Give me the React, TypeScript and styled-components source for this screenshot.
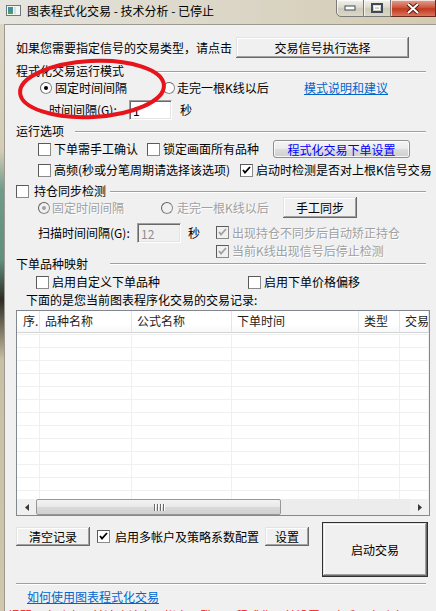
import styled, { createGlobalStyle } from "styled-components";

const GlobalStyle = createGlobalStyle`
  html, body {
    margin: 0;
    padding: 0;
    background: #f0f0f0;
  }
`;

const FONT = `"Noto Sans CJK SC", "Liberation Sans", sans-serif`;

const Win = styled.div`
  position: relative;
  width: 436px;
  height: 611px;
  overflow: hidden;
  display: flex;
  flex-direction: column;
  font: 12px ${FONT};
  color: #000;
  background: linear-gradient(
    to bottom,
    #ddd8c6 0px,
    #d4cdb6 150px,
    #6f9c8c 190px,
    #5f8f7f 260px,
    #2e2c24 300px,
    #c9c0a4 360px,
    #cfc7ae 611px
  );
`;

const TitleBar = styled.div`
  height: 24px;
  flex-shrink: 0;
  display: flex;
  align-items: flex-start;
  background: linear-gradient(to right, #e6e5df 0%, #dcd8ca 45%, #d3cab0 100%);
`;

const AppIcon = styled.svg`
  margin: 5px 0 0 6px;
`;

const Title = styled.div`
  margin-left: 6px;
  line-height: 22px;
  white-space: nowrap;
  color: #000;
`;

const Spacer = styled.div`
  flex: 1;
`;

const CapGroup = styled.div`
  display: flex;
  margin-top: -1px;
`;

const CapBtn = styled.div<{ $w: number; $close?: boolean; $first?: boolean }>`
  width: ${(p) => p.$w}px;
  height: 18px;
  display: flex;
  align-items: center;
  justify-content: center;
  box-sizing: border-box;
  border: 1px solid ${(p) => (p.$close ? "#6b2a1e" : "#7a7a76")};
  border-left-width: ${(p) => (p.$first ? 1 : 0)}px;
  border-radius: ${(p) => (p.$first ? "0 0 0 5px" : "0")};
  background: ${(p) =>
    p.$close
      ? "linear-gradient(to bottom, #e0a394 0%, #cf5a40 45%, #c0381e 55%, #d9755c 100%)"
      : "linear-gradient(to bottom, #f3f1ea 0%, #dedacd 45%, #cfcab9 55%, #dcd8c8 100%)"};
  box-shadow: inset 1px 1px rgba(255, 255, 255, 0.7);
`;

const Client = styled.div`
  flex: 1;
  margin-left: 4px;
  background: #f0f0f0;
  border-top: 1px solid #9c9a90;
  border-left: 1px solid #9c9a90;
  padding: 11px 0 0 11px;
  display: flex;
  flex-direction: column;
`;

const Row = styled.div<{ $h: number; $mt?: number; $pl?: number }>`
  display: flex;
  align-items: center;
  height: ${(p) => p.$h}px;
  margin-top: ${(p) => p.$mt ?? 0}px;
  padding-left: ${(p) => p.$pl ?? 0}px;
  white-space: nowrap;
  flex-shrink: 0;
`;

const Slot = styled.div<{ $w?: number; $ml?: number }>`
  display: flex;
  align-items: center;
  flex-shrink: 0;
  width: ${(p) => (p.$w ? `${p.$w}px` : "auto")};
  margin-left: ${(p) => p.$ml ?? 0}px;
`;

const Text = styled.span<{ $dis?: boolean }>`
  line-height: 14px;
  color: ${(p) => (p.$dis ? "#a0a0a0" : "#000")};
  text-shadow: ${(p) => (p.$dis ? "1px 1px #ffffff" : "none")};
`;

const Line = styled.div`
  flex: 1;
  height: 1px;
  margin-right: 10px;
  background: #a0a0a0;
  box-shadow: 0 1px #ffffff;
`;

const Btn = styled.button<{ $w: number; $h: number }>`
  width: ${(p) => p.$w}px;
  height: ${(p) => p.$h}px;
  flex-shrink: 0;
  padding: 0;
  border: none;
  background: #f0f0f0;
  font: 12px ${FONT};
  color: #000;
  box-shadow: inset -1px -1px #696969, inset 1px 1px #e3e3e3,
    inset -2px -2px #a0a0a0, inset 2px 2px #ffffff;
`;

const DefaultBtn = styled(Btn)`
  border: 1px solid #303030;
  box-sizing: border-box;
`;

const ThemedBtn = styled.button<{ $w: number; $h: number }>`
  width: ${(p) => p.$w}px;
  height: ${(p) => p.$h}px;
  flex-shrink: 0;
  padding: 0;
  box-sizing: border-box;
  border: 1px solid #8e8f8f;
  border-radius: 3px;
  background: linear-gradient(to bottom, #f4f4f4 0%, #ebebeb 50%, #dddddd 51%, #cfcfcf 100%);
  font: 12px ${FONT};
  color: #0000ff;
  box-shadow: inset 0 0 0 1px rgba(255, 255, 255, 0.8);
`;

const Input = styled.div<{ $w: number; $dis?: boolean }>`
  width: ${(p) => p.$w}px;
  height: 20px;
  box-sizing: border-box;
  flex-shrink: 0;
  padding: 3px 0 0 3px;
  line-height: 14px;
  background: ${(p) => (p.$dis ? "#f0f0f0" : "#ffffff")};
  color: ${(p) => (p.$dis ? "#8d8d8d" : "#000")};
  border-top: 1px solid #a0a0a0;
  border-left: 1px solid #a0a0a0;
  border-right: 1px solid #ffffff;
  border-bottom: 1px solid #ffffff;
  box-shadow: inset 1px 1px #696969, inset -1px -1px #e3e3e3;
`;

const Box = styled.span<{ $dis?: boolean; $gap?: number }>`
  width: 13px;
  height: 13px;
  box-sizing: border-box;
  flex-shrink: 0;
  display: inline-flex;
  align-items: center;
  justify-content: center;
  margin-right: ${(p) => p.$gap ?? 3}px;
  background: ${(p) => (p.$dis ? "#f0f0f0" : "#ffffff")};
  border: 1px solid #8a8a8a;
  border-top-color: #5a5a5a;
  border-left-color: #5a5a5a;
`;

const Dot = styled.span<{ $dis?: boolean; $gap?: number }>`
  width: 12px;
  height: 12px;
  box-sizing: border-box;
  flex-shrink: 0;
  border-radius: 50%;
  display: inline-flex;
  align-items: center;
  justify-content: center;
  margin-right: ${(p) => p.$gap ?? 3}px;
  background: ${(p) => (p.$dis ? "#f0f0f0" : "#ffffff")};
  border: 1px solid #8a8a8a;
  border-top-color: #606060;
  border-left-color: #606060;
`;

const Pip = styled.span<{ $dis?: boolean }>`
  width: 4px;
  height: 4px;
  border-radius: 50%;
  background: ${(p) => (p.$dis ? "#a0a0a0" : "#000")};
`;

const Link = styled.span`
  color: #0066cc;
  text-decoration: underline;
  line-height: 14px;
`;

const List = styled.div`
  width: 414px;
  height: 206px;
  margin-top: 3px;
  box-sizing: border-box;
  border: 1px solid #828790;
  background: #ffffff;
  display: flex;
  flex-direction: column;
  overflow: hidden;
  flex-shrink: 0;
`;

const COLS = "23px 92px 100px 127px 41px 1fr";

const Header = styled.div`
  display: grid;
  grid-template-columns: ${COLS};
  height: 22px;
  flex-shrink: 0;
  border-bottom: 1px solid #d5d5d5;
  box-sizing: border-box;
  background: linear-gradient(to bottom, #ffffff 0%, #ffffff 60%, #f7f8f9 100%);
`;

const HeadCell = styled.div<{ $pl?: number }>`
  padding-left: ${(p) => p.$pl ?? 5}px;
  border-right: 1px solid #e3e5e7;
  line-height: 20px;
  color: #1e1e1e;
  white-space: nowrap;
  overflow: hidden;
`;

const Body = styled.div`
  flex: 1;
  padding-top: 1px;
  overflow: hidden;
`;

const BodyRow = styled.div`
  display: grid;
  grid-template-columns: ${COLS};
  height: 13px;
  box-sizing: border-box;
  border-top: 1px solid #f0f0f0;
`;

const BodyCell = styled.div`
  border-right: 1px solid #f0f0f0;
`;

const HScroll = styled.div`
  height: 16px;
  flex-shrink: 0;
  display: flex;
  align-items: stretch;
  background: #f0f0f0;
`;

const Arrow = styled.div`
  width: 19px;
  display: flex;
  align-items: center;
  justify-content: center;
`;

const Thumb = styled.div`
  width: 245px;
  box-sizing: border-box;
  border: 1px solid #979797;
  border-radius: 2px;
  background: linear-gradient(to bottom, #f3f3f3 0%, #e8e8e8 50%, #d9d9d9 51%, #d0d0d0 100%);
  display: flex;
  align-items: center;
  justify-content: center;
  gap: 2px;
`;

const Grip = styled.span`
  width: 1px;
  height: 7px;
  background: #6a6a6a;
  box-shadow: 1px 0 #ffffff;
`;

const Track = styled.div`
  flex: 1;
  background: #ececec;
`;

const BottomRow = styled.div`
  display: flex;
  align-items: flex-start;
  margin-top: 6px;
  flex-shrink: 0;
`;

const LeftGroup = styled.div`
  display: flex;
  align-items: center;
  margin-top: 5px;
  height: 19px;
`;

const Sep = styled.div`
  width: 410px;
  height: 1px;
  margin-top: 6px;
  background: #a0a0a0;
  box-shadow: 0 1px #ffffff;
  flex-shrink: 0;
`;

const Warn = styled.div`
  margin: 5px 0 0 -8px;
  color: #ff0000;
  line-height: 14px;
  white-space: nowrap;
`;

const Ring = styled.svg`
  position: absolute;
  left: 12px;
  top: 54px;
  pointer-events: none;
`;

function Check({
  label,
  checked,
  dis,
  gap,
}: {
  label: string;
  checked?: boolean;
  dis?: boolean;
  gap?: number;
}) {
  return (
    <Slot>
      <Box $dis={dis} $gap={gap}>
        {checked && (
          <svg width="9" height="9" viewBox="0 0 9 9">
            <path
              d="M1 4 L3 6.5 L8 1"
              fill="none"
              stroke={dis ? "#a0a0a0" : "#000"}
              strokeWidth="1.8"
            />
          </svg>
        )}
      </Box>
      <Text $dis={dis}>{label}</Text>
    </Slot>
  );
}

function Radio({
  label,
  checked,
  dis,
  gap,
}: {
  label: string;
  checked?: boolean;
  dis?: boolean;
  gap?: number;
}) {
  return (
    <Slot>
      <Dot $dis={dis} $gap={gap}>
        {checked && <Pip $dis={dis} />}
      </Dot>
      <Text $dis={dis}>{label}</Text>
    </Slot>
  );
}

function GroupHead({ children, start, mt, h }: { children: React.ReactNode; start: number; mt: number; h: number }) {
  return (
    <Row $h={h} $mt={mt}>
      <Slot $w={start}>{children}</Slot>
      <Line />
    </Row>
  );
}

const columns = ["序.", "品种名称", "公式名称", "下单时间", "类型", "交易"];

export default function App() {
  return (
    <Win>
      <GlobalStyle />
      <TitleBar>
        <AppIcon width="15" height="11" viewBox="0 0 15 11">
          <rect x="0.5" y="0.5" width="14" height="10" fill="#f4f4f4" stroke="#6c7a80" />
          <rect x="2" y="2" width="5" height="7" fill="#3f8fa0" />
          <rect x="2" y="6" width="5" height="3" fill="#4aa05a" />
          <rect x="8" y="2" width="2" height="7" fill="#d8dee2" />
        </AppIcon>
        <Title>图表程式化交易 - 技术分析 - 已停止</Title>
        <Spacer />
        <CapGroup>
          <CapBtn $w={28} $first>
            <svg width="12" height="6" viewBox="0 0 12 6">
              <rect x="1" y="1" width="10" height="4" fill="#fff" stroke="#3d4a5a" />
            </svg>
          </CapBtn>
          <CapBtn $w={27}>
            <svg width="12" height="10" viewBox="0 0 12 10">
              <rect x="1" y="1" width="10" height="8" fill="none" stroke="#3d4a5a" strokeWidth="2" />
              <rect x="3.5" y="3.5" width="5" height="3" fill="none" stroke="#fff" />
            </svg>
          </CapBtn>
          <CapBtn $w={45} $close>
            <svg width="14" height="11" viewBox="0 0 14 11">
              <path d="M2 1 L12 10 M12 1 L2 10" stroke="#5a1a10" strokeWidth="4" />
              <path d="M2 1 L12 10 M12 1 L2 10" stroke="#ffffff" strokeWidth="2" />
            </svg>
          </CapBtn>
        </CapGroup>
      </TitleBar>

      <Client>
        <Row $h={21} $mt={1}>
          <Slot $w={220}>
            <Text>如果您需要指定信号的交易类型，请点击</Text>
          </Slot>
          <Btn $w={173} $h={21}>交易信号执行选择</Btn>
        </Row>

        <GroupHead start={134} mt={6} h={14}>
          <Text>程式化交易运行模式</Text>
        </GroupHead>

        <Row $h={14} $mt={3} $pl={24}>
          <Slot $w={123}>
            <Radio label="固定时间间隔" checked />
          </Slot>
          <Slot $w={141}>
            <Radio label="走完一根K线以后" gap={2} />
          </Slot>
          <Link>模式说明和建议</Link>
        </Row>

        <Row $h={20} $mt={5} $pl={33}>
          <Slot $w={80}>
            <Text>时间间隔(G):</Text>
          </Slot>
          <Input $w={43}>1</Input>
          <Slot $ml={8}>
            <Text>秒</Text>
          </Slot>
        </Row>

        <GroupHead start={59} mt={4} h={14}>
          <Text>运行选项</Text>
        </GroupHead>

        <Row $h={18} $mt={2} $pl={22}>
          <Slot $w={109}>
            <Check label="下单需手工确认" />
          </Slot>
          <Slot $w={126}>
            <Check label="锁定画面所有品种" />
          </Slot>
          <ThemedBtn $w={137} $h={18}>程式化交易下单设置</ThemedBtn>
        </Row>

        <Row $h={14} $mt={5} $pl={22}>
          <Slot $w={202}>
            <Check label="高频(秒或分笔周期请选择该选项)" />
          </Slot>
          <Check label="启动时检测是否对上根K信号交易" checked />
        </Row>

        <GroupHead start={94} mt={8} h={12}>
          <Check label="持仓同步检测" gap={5} />
        </GroupHead>

        <Row $h={21} $pl={22}>
          <Slot $w={123}>
            <Radio label="固定时间间隔" checked dis gap={2} />
          </Slot>
          <Slot $w={122}>
            <Radio label="走完一根K线以后" dis gap={4} />
          </Slot>
          <Btn $w={74} $h={21}>手工同步</Btn>
        </Row>

        <Row $h={21} $mt={4} $pl={22}>
          <Slot $w={99}>
            <Text>扫描时间间隔(G):</Text>
          </Slot>
          <Input $w={44} $dis>
            12
          </Input>
          <Slot $w={35}>
            <Slot $ml={7}>
              <Text>秒</Text>
            </Slot>
          </Slot>
          <Check label="出现持仓不同步后自动矫正持仓" checked dis />
        </Row>

        <Row $h={12} $mt={2} $pl={200}>
          <Check label="当前K线出现信号后停止检测" checked dis />
        </Row>

        <GroupHead start={94} mt={0} h={13}>
          <Text>下单品种映射</Text>
        </GroupHead>

        <Row $h={14} $mt={5} $pl={20}>
          <Slot $w={212}>
            <Check label="启用自定义下单品种" />
          </Slot>
          <Check label="启用下单价格偏移" />
        </Row>

        <Row $h={14} $mt={4} $pl={10}>
          <Text>下面的是您当前图表程序化交易的交易记录:</Text>
        </Row>

        <List>
          <Header>
            {columns.map((c, i) => (
              <HeadCell key={c} $pl={i === 0 ? 6 : 5}>
                {c}
              </HeadCell>
            ))}
          </Header>
          <Body>
            {Array.from({ length: 13 }).map((_, r) => (
              <BodyRow key={r}>
                {columns.map((c) => (
                  <BodyCell key={c} />
                ))}
              </BodyRow>
            ))}
          </Body>
          <HScroll>
            <Arrow>
              <svg width="4" height="7" viewBox="0 0 4 7">
                <path d="M4 0 L0 3.5 L4 7 Z" fill="#3a3a3a" />
              </svg>
            </Arrow>
            <Thumb>
              <Grip />
              <Grip />
              <Grip />
              <Grip />
            </Thumb>
            <Track />
            <Arrow>
              <svg width="4" height="7" viewBox="0 0 4 7">
                <path d="M0 0 L4 3.5 L0 7 Z" fill="#3a3a3a" />
              </svg>
            </Arrow>
          </HScroll>
        </List>

        <BottomRow>
          <LeftGroup>
            <Btn $w={74} $h={19}>清空记录</Btn>
            <Slot $w={168} $ml={7}>
              <Check label="启用多帐户及策略系数配置" checked gap={5} />
            </Slot>
            <Btn $w={44} $h={19}>设置</Btn>
          </LeftGroup>
          <Slot $ml={13}>
            <DefaultBtn $w={106} $h={55}>启动交易</DefaultBtn>
          </Slot>
        </BottomRow>

        <Sep />

        <Row $h={14} $mt={6} $pl={11}>
          <Link>如何使用图表程式化交易</Link>
        </Row>

        <Warn>提醒：启动交易前请确认交易帐户已登录，程式化下单设置正确后再启动交易。</Warn>
      </Client>

      <Ring width="160" height="72" viewBox="0 0 160 72">
        <ellipse
          cx="80"
          cy="35"
          rx="72"
          ry="28"
          fill="none"
          stroke="#e8141c"
          strokeWidth="4"
          transform="rotate(-3 80 35)"
        />
      </Ring>
    </Win>
  );
}
